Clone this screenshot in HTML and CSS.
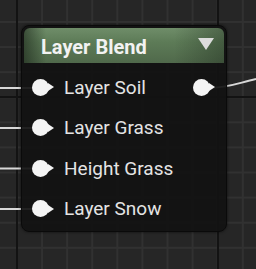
FILE: index.html
```html
<!DOCTYPE html>
<html lang="en">
<head>
    <meta charset="UTF-8">
    <meta name="viewport" content="width=device-width, initial-scale=1.0">
    <title>Layer Blend</title>
    <link rel="stylesheet" href="styles.css">
</head>
<body>

    <div class="graph">
        <!-- Cables -->
        <svg class="wires" width="256" height="269" viewBox="0 0 256 269">
            <path d="M0 88 H36" />
            <path d="M0 128 H36" />
            <path d="M0 168.5 H36" />
            <path d="M0 209 H36" />
            <path d="M208 88 C228 88, 238 83, 256 79" />
        </svg>

        <!-- Nodo -->
        <div class="node">
            <div class="node__header">
                <span class="node__title">Layer Blend</span>
                <span class="node__arrow"></span>
            </div>
            <div class="node__body">
                <div class="node__inputs">
                    <div class="pin"><span class="pin__dot"></span><span class="pin__label">Layer Soil</span></div>
                    <div class="pin"><span class="pin__dot"></span><span class="pin__label">Layer Grass</span></div>
                    <div class="pin"><span class="pin__dot"></span><span class="pin__label">Height Grass</span></div>
                    <div class="pin"><span class="pin__dot"></span><span class="pin__label">Layer Snow</span></div>
                </div>
                <div class="node__outputs">
                    <div class="pin"><span class="pin__dot"></span></div>
                </div>
            </div>
        </div>
    </div>

</body>
</html>
```

FILE: styles.css
```css
* {
    box-sizing: border-box;
}
body {
    margin: 0;
    font-family: Roboto, "Noto Sans", sans-serif;
    background-color: #262626;
}

.graph {
    position: relative;
    width: 256px;
    height: 269px;
    overflow: hidden;
    background-color: #262626;
    background-image:
        linear-gradient(90deg, #131313 2px, transparent 2px),
        linear-gradient(#131313 2px, transparent 2px),
        linear-gradient(90deg, #313131 2px, transparent 2px),
        linear-gradient(#313131 2px, transparent 2px);
    background-size: 201px 201px, 201px 201px, 25.1px 25.1px, 25.1px 25.1px;
    background-position: 16px 0, 0 96px, 16px 0, 0 21px;
}

.wires {
    position: absolute;
    top: 0;
    left: 0;
}

.wires path {
    fill: none;
    stroke: #d8d8d8;
    stroke-width: 2;
}

/* Nodo */
.node {
    position: absolute;
    left: 21px;
    top: 25px;
    width: 206px;
    height: 207px;
    padding: 2px;
    border-radius: 8px;
    background-color: rgba(18, 18, 18, 0.93);
    border: 1px solid #0a0a0a;
    box-shadow: 0 0 3px rgba(0,0,0,0.6);
}

.node__header {
    display: flex;
    align-items: center;
    justify-content: space-between;
    height: 35px;
    padding: 0 10px 0 17px;
    border-radius: 6px 6px 0 0;
    background:
        linear-gradient(90deg, rgba(20,30,20,0.55) 0, rgba(20,30,20,0) 22px, rgba(20,30,20,0) 150px, rgba(20,30,20,0.35) 100%),
        linear-gradient(#6f8d69 0, #5d7b57 40%, #50694b 100%);
}

.node__title {
    color: #f2f2f2;
    font-size: 20px;
    font-weight: bold;
    padding-top: 3px;
}

.node__arrow {
    width: 0;
    height: 0;
    border-left: 8px solid transparent;
    border-right: 8px solid transparent;
    border-top: 12px solid #dcdcdc;
    margin-top: -3px;
}

.node__body {
    display: flex;
    justify-content: space-between;
    padding-top: 4px;
}

.pin {
    display: flex;
    align-items: center;
    height: 40.5px;
}

.node__inputs .pin {
    padding-left: 8px;
}

.node__outputs .pin {
    padding-right: 14px;
}

.pin__dot {
    position: relative;
    width: 17px;
    height: 17px;
    border-radius: 50%;
    background-color: #f4f4f4;
}

.pin__dot::after {
    content: "";
    position: absolute;
    left: 16px;
    top: 4.5px;
    border-left: 6px solid #f4f4f4;
    border-top: 4px solid transparent;
    border-bottom: 4px solid transparent;
}

.pin__label {
    margin-left: 15px;
    color: #e4e4e4;
    font-size: 19px;
}
```
